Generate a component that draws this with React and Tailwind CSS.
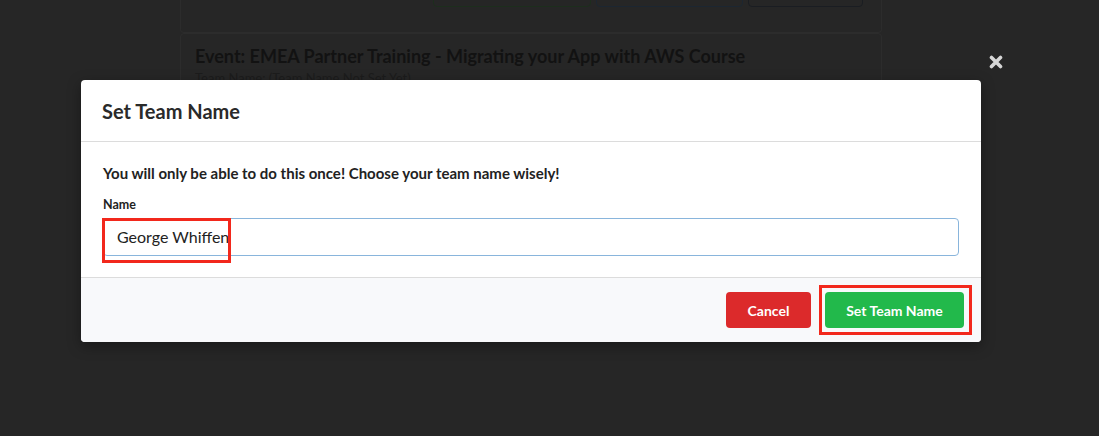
import React from 'react';

const App = () => {
  return (
    <div className="relative h-[436px] w-[1099px] overflow-hidden bg-[#262626] font-['Lato','Noto_Sans',sans-serif]">
      {/* Dimmed page behind the modal */}
      <div className="ml-[180px] w-[702px]">
        <div className="flex h-[33px] flex-col rounded-b border border-t-0 border-[#2c2c2c]">
          <div className="-mt-[23px] flex justify-end gap-[5px] pr-[18px]">
            <div className="h-[30px] w-[158px] rounded border border-[#1d2e1d]" />
            <div className="h-[30px] w-[147px] rounded border border-[#1c2631]" />
            <div className="h-[30px] w-[115px] rounded border border-[#1a1d22]" />
          </div>
        </div>
        <div className="h-[120px] rounded border border-[#2c2c2c] pl-[14px] pt-[9px]">
          <h2 className="text-[18px] font-bold leading-[26px] text-[#121212]">
            Event: EMEA Partner Training - Migrating your App with AWS Course
          </h2>
          <p className="text-[13px] leading-[18px] text-[#1c1c1c]">Team Name: (Team Name Not Set Yet)</p>
        </div>
      </div>

      {/* Close icon */}
      <button className="absolute left-[989px] top-[55px] text-[#d6d6d6]">
        <svg width="14" height="14" viewBox="0 0 14 14">
          <path d="M2.5 2.5 L11.5 11.5 M11.5 2.5 L2.5 11.5" stroke="currentColor" strokeWidth="3.6" strokeLinecap="round" />
        </svg>
      </button>

      {/* Modal */}
      <div className="absolute left-[81px] top-[80px] w-[900px] overflow-hidden rounded-[4px] bg-white shadow-[0_4px_14px_rgba(0,0,0,0.35)]">
        <div className="flex h-[62px] items-center border-b border-[#dcdcdc] px-[21px]">
          <h3 className="text-[20px] font-bold text-[#2a2a2a]">Set Team Name</h3>
        </div>
        <div className="px-[22px] pb-[21px] pt-[21px]">
          <p className="text-[15px] font-bold leading-[20px] text-[#222]">
            You will only be able to do this once! Choose your team name wisely!
          </p>
          <label className="mt-[14px] block text-[12.5px] font-bold leading-[16px] text-[#222]">Name</label>
          <div className="mt-[5px] flex h-[38px] items-center rounded-[4px] border border-[#89b5dc] pl-[13px] text-[16px] text-[#222]">
            George Whiffen<span className="ml-[1px] inline-block h-[19px] w-px bg-[#222]" />
          </div>
        </div>
        <div className="flex h-[65px] items-center justify-end gap-[14px] border-t border-[#dcdcdc] bg-[#f8f9fb] pr-[17px]">
          <button className="h-[36px] w-[85px] rounded-[4px] bg-[#dc2a2b] text-[14px] font-bold text-white">Cancel</button>
          <button className="h-[36px] w-[139px] rounded-[4px] bg-[#22b94b] text-[14px] font-bold text-white">Set Team Name</button>
        </div>
      </div>

      {/* Annotation boxes */}
      <div className="absolute left-[102px] top-[218px] h-[45px] w-[129px] border-[3px] border-[#f2281c]" />
      <div className="absolute left-[819px] top-[285px] h-[50px] w-[153px] border-[3px] border-[#f2281c]" />
    </div>
  );
};

export default App;
